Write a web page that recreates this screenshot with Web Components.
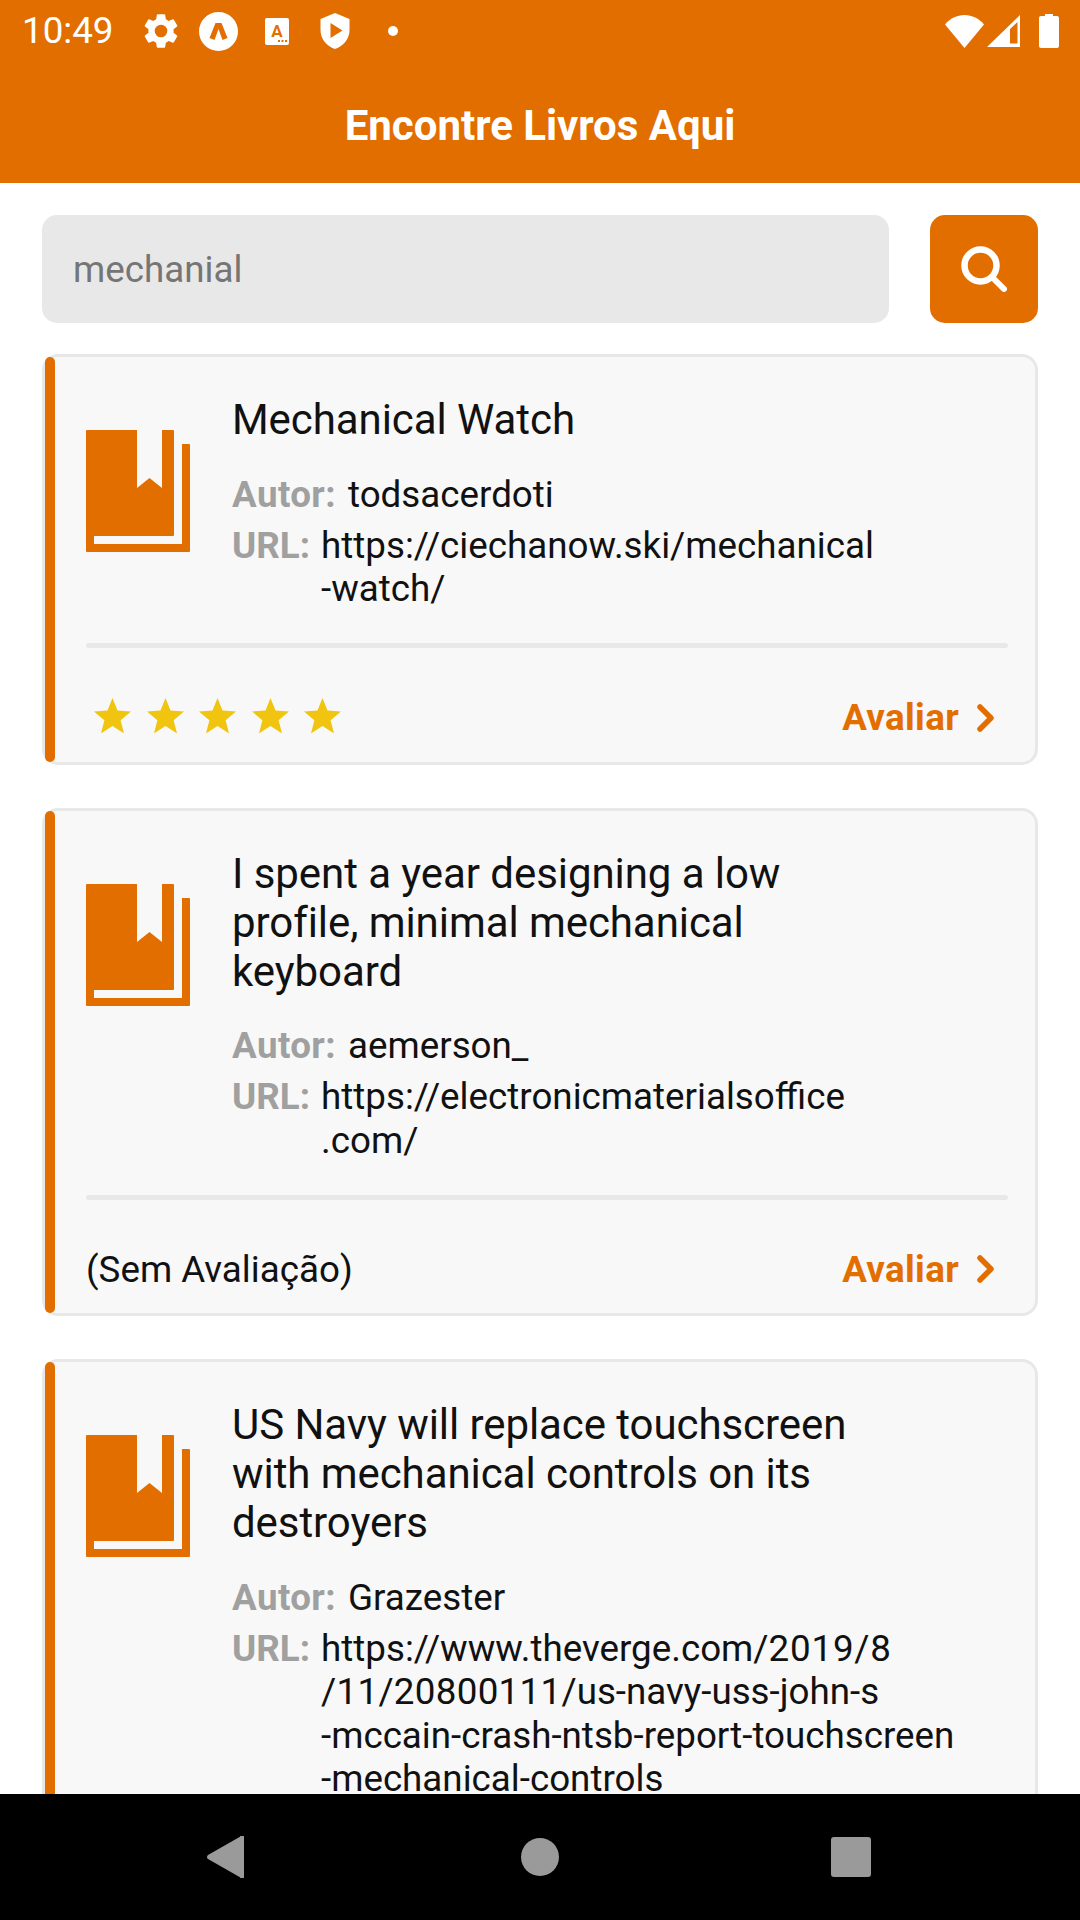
<!DOCTYPE html>
<html lang="pt">
<head>
<meta charset="utf-8">
<title>Encontre Livros Aqui</title>
<style>
  html, body { margin: 0; padding: 0; height: 100%; background: #fff; }
  body { font-family: Roboto, "Liberation Sans", sans-serif; overflow: hidden; }
  #app { display: flex; flex-direction: column; height: 1920px; width: 1080px; }
  #list { flex: 1; min-height: 0; overflow: hidden; display: flex; flex-direction: column; gap: 43px; padding: 31px 42px 0; }
  .wide { letter-spacing: .8px; }
  .wide-s { letter-spacing: .3px; }
</style>
</head>
<body>
<div id="app">
  <status-bar></status-bar>
  <app-header>Encontre Livros Aqui</app-header>
  <search-bar value="mechanial"></search-bar>
  <div id="list">
    <book-card rating="5">
      <span slot="title">Mechanical Watch</span>
      <span slot="author">todsacerdoti</span>
      <span slot="url">https://ciechanow.ski/mechanical<br>-watch/</span>
    </book-card>
    <book-card>
      <span slot="title">I spent a year designing a low<br>profile, minimal mechanical<br>keyboard</span>
      <span slot="author">aemerson_</span>
      <span slot="url">https://electronicmaterialsoffice<br>.com/</span>
    </book-card>
    <book-card rating="5">
      <span slot="title">US Navy will replace touchscreen<br>with mechanical controls on its<br>destroyers</span>
      <span slot="author">Grazester</span>
      <span slot="url">https://www.theverge.com/<span class="wide">2019/8</span><br><span class="wide-s">/11/20800111</span>/us-navy-uss-john-s<br>-mccain-crash-ntsb-report-touchscreen<br>-mechanical-controls</span>
    </book-card>
  </div>
  <nav-bar></nav-bar>
</div>

<script>
// Status bar with notification icons on the left and system icons on the right
class StatusBar extends HTMLElement {
  constructor() {
    super();
    this.attachShadow({ mode: 'open' });
  }

  connectedCallback() {
    this.shadowRoot.innerHTML = `
      <style>
        :host { display: flex; align-items: center; height: 62px; background: #e36e00; color: #fff; padding: 0 21px 0 22px; box-sizing: border-box; flex: none; }
        .time { font-size: 36.750px; line-height: 62px; width: 118px; }
        svg { display: block; flex: none; fill: #fff; }
        .spacer { flex: 1; }
      </style>
      <span class="time">10:49</span>
      <svg width="42" height="42" viewBox="0 0 24 24"><path d="M19.14 12.94c.04-.3.06-.61.06-.94s-.02-.64-.07-.94l2.03-1.58a.49.49 0 0 0 .12-.61l-1.92-3.32a.49.49 0 0 0-.59-.22l-2.39.96a7 7 0 0 0-1.62-.94l-.36-2.54a.48.48 0 0 0-.48-.41h-3.84a.47.47 0 0 0-.47.41l-.36 2.54c-.59.24-1.13.57-1.62.94l-2.39-.96a.48.48 0 0 0-.59.22L2.73 8.87a.48.48 0 0 0 .12.61l2.03 1.58c-.05.3-.08.63-.08.94s.02.64.07.94l-2.03 1.58a.49.49 0 0 0-.12.61l1.92 3.32c.12.22.37.29.59.22l2.39-.96c.5.38 1.03.7 1.62.94l.36 2.54c.05.24.24.41.48.41h3.84c.24 0 .44-.17.47-.41l.36-2.54a7 7 0 0 0 1.62-.94l2.39.96c.22.08.47 0 .59-.22l1.92-3.32a.46.46 0 0 0-.12-.61zM12 15.6A3.6 3.6 0 1 1 12 8.4a3.6 3.6 0 0 1 0 7.2z"/></svg>
      <svg width="39" height="39" viewBox="0 0 39 39" style="margin-left:17px"><path fill-rule="evenodd" d="M19.500 0a19.500 19.500 0 1 1 0 39a19.500 19.500 0 0 1 0-39zM16.500 11l-6 15l5 2l4-11l4 11l5-2l-6-15z"/></svg>
      <svg width="24" height="27" viewBox="0 0 24 27" style="margin-left:27px"><rect width="24" height="27" rx="2"/><text x="12" y="19" text-anchor="middle" font-family="Roboto, sans-serif" font-weight="700" font-size="17" fill="#e36e00">A</text><rect x="13" y="22" width="2" height="2" fill="#e36e00"/><rect x="16.500" y="22" width="2" height="2" fill="#e36e00"/><rect x="20" y="22" width="2" height="2" fill="#e36e00"/></svg>
      <svg width="30" height="36" viewBox="0 0 29 36" style="margin-left:31px"><path fill-rule="evenodd" d="M14.500 0L29 6v11c0 9-6 16-14.500 19C6 33 0 26 0 17V6zM10 10v15l12-7.500z"/></svg>
      <svg width="10" height="10" viewBox="0 0 10 10" style="margin-left:38px"><circle cx="5" cy="5" r="5"/></svg>
      <span class="spacer"></span>
      <svg width="39" height="33" viewBox="0 0 39 33"><path d="M19.500 33L0 9.500C5 3.500 12 0 19.500 0S34 3.500 39 9.500z"/></svg>
      <svg width="33" height="32" viewBox="0 0 33 32" style="margin-left:3px"><path fill-rule="evenodd" d="M33 0v32H0zM30.500 7L23 14v14.500h7.500z"/></svg>
      <svg width="20" height="34" viewBox="0 0 20 34" style="margin-left:19px"><path d="M6 0h8v2h4a2 2 0 0 1 2 2v28a2 2 0 0 1-2 2H2a2 2 0 0 1-2-2V4a2 2 0 0 1 2-2h4z"/></svg>
    `;
  }
}

class AppHeader extends HTMLElement {
  constructor() {
    super();
    this.attachShadow({ mode: 'open' });
  }

  connectedCallback() {
    this.shadowRoot.innerHTML = `
      <style>
        :host { display: flex; align-items: center; justify-content: center; height: 121px; background: #e36e00; color: #fff; font-size: 42px; font-weight: 700; flex: none; padding-top: 5px; box-sizing: border-box; }
      </style>
      <slot></slot>
    `;
  }
}

class SearchBar extends HTMLElement {
  constructor() {
    super();
    this.attachShadow({ mode: 'open' });
  }

  connectedCallback() {
    const value = this.getAttribute('value') || '';
    this.shadowRoot.innerHTML = `
      <style>
        :host { display: flex; gap: 41px; padding: 32px 42px 0; flex: none; }
        .input { flex: 1; height: 108px; background: #e8e8e8; border-radius: 15px; color: #757575; font-size: 36.750px; line-height: 110px; padding-left: 31px; }
        .button { width: 108px; height: 108px; background: #e36e00; border-radius: 15px; display: flex; align-items: center; justify-content: center; }
        svg { display: block; }
      </style>
      <div class="input">${value}</div>
      <div class="button">
        <svg width="46" height="46" viewBox="0 0 46 46" fill="none" stroke="#fff" stroke-linecap="round"><circle cx="19.500" cy="19.500" r="16" stroke-width="6.500"/><path d="M31 31l12 12" stroke-width="6"/></svg>
      </div>
    `;
  }
}

class StarRating extends HTMLElement {
  constructor() {
    super();
    this.attachShadow({ mode: 'open' });
  }

  connectedCallback() {
    const value = Number(this.getAttribute('value')) || 0;
    const star = `<svg width="37" height="35" viewBox="0 0 37 35"><path fill="#f1c40f" d="M18.500 0l5 12.600 13.500.9-10.400 8.700 3.400 13.200-11.500-7.300-11.500 7.300 3.400-13.200L0 13.500l13.500-.9z"/></svg>`;
    this.shadowRoot.innerHTML = `
      <style>
        :host { display: flex; gap: 15.500px; padding-left: 8px; }
        svg { display: block; }
      </style>
      ${star.repeat(value)}
    `;
  }
}

class BookCard extends HTMLElement {
  constructor() {
    super();
    this.attachShadow({ mode: 'open' });
  }

  connectedCallback() {
    const rating = this.getAttribute('rating');
    this.shadowRoot.innerHTML = `
      <style>
        :host { display: flex; flex: none; background: #f8f8f8; border: 3px solid #e8e8e8; border-radius: 16px; color: #111; }
        .bar { flex: none; width: 10px; background: #e36e00; border-radius: 5px; }
        .body { flex: 1; min-width: 0; padding: 0 27px 0 31px; }
        .top { display: flex; gap: 42px; padding-top: 38px; }
        .book { flex: none; display: block; margin-top: 35px; }
        .title { font-size: 42px; line-height: 49px; letter-spacing: -.07px; }
        .row { display: flex; font-size: 36.750px; line-height: 43.500px; }
        .row b { flex: none; color: #a0a0a0; font-weight: 700; margin-right: 11px; }
        .author { margin-top: 28.500px; }
        .author b { letter-spacing: .4px; margin-right: 12px; }
        .url { margin-top: 7.500px; }
        .rule { height: 5px; background: #e8e8e8; border-radius: 3px; margin-top: 32.500px; }
        .foot { display: flex; align-items: center; justify-content: space-between; height: 113.600px; padding-top: 22px; box-sizing: border-box; }
        .none { font-size: 36.750px; margin-top: 4px; }
        .rate { display: flex; align-items: center; color: #e36e00; font-size: 36.750px; font-weight: 700; letter-spacing: .35px; padding-right: 14px; margin-top: 4px; }
        .rate svg { display: block; margin-left: 18px; }
      </style>
      <div class="bar"></div>
      <div class="body">
        <div class="top">
          <svg class="book" width="104" height="122" viewBox="0 0 104 122" fill="#e36e00"><path d="M1 0H51V58L63.500 48L76 58V0H87a1 1 0 0 1 1 1V105a1 1 0 0 1-1 1H0V1a1 1 0 0 1 1-1z"/><path d="M96 14h7a1 1 0 0 1 1 1V121a1 1 0 0 1-1 1H1a1 1 0 0 1-1-1V106h8v8H96z"/></svg>
          <div>
            <div class="title"><slot name="title"></slot></div>
            <div class="row author"><b>Autor:</b><slot name="author"></slot></div>
            <div class="row url"><b>URL:</b><slot name="url"></slot></div>
          </div>
        </div>
        <div class="rule"></div>
        <div class="foot">
          ${rating ? `<star-rating value="${rating}"></star-rating>` : '<span class="none">(Sem Avaliação)</span>'}
          <span class="rate">Avaliar<svg width="17" height="28" viewBox="0 0 17 28" fill="none" stroke="#e36e00" stroke-width="5.500" stroke-linecap="round" stroke-linejoin="round"><path d="M3 3l11 11L3 25"/></svg></span>
        </div>
      </div>
    `;
  }
}

class NavBar extends HTMLElement {
  constructor() {
    super();
    this.attachShadow({ mode: 'open' });
  }

  connectedCallback() {
    this.shadowRoot.innerHTML = `
      <style>
        :host { display: flex; align-items: center; height: 126px; background: #000; padding-left: 207px; flex: none; box-sizing: border-box; }
        svg { display: block; fill: #9a9a9a; }
      </style>
      <svg width="37" height="42" viewBox="0 0 37 42"><path d="M33 .7a2 2 0 0 1 4 1.300V40a2 2 0 0 1-4 1.300L1 23a2.500 2.500 0 0 1 0-4z"/></svg>
      <svg width="38" height="38" viewBox="0 0 38 38" style="margin-left:277px"><circle cx="19" cy="19" r="19"/></svg>
      <svg width="40" height="40" viewBox="0 0 40 40" style="margin-left:272px"><rect width="40" height="40" rx="3"/></svg>
    `;
  }
}

customElements.define('status-bar', StatusBar);
customElements.define('app-header', AppHeader);
customElements.define('search-bar', SearchBar);
customElements.define('star-rating', StarRating);
customElements.define('book-card', BookCard);
customElements.define('nav-bar', NavBar);
</script>
</body>
</html>
